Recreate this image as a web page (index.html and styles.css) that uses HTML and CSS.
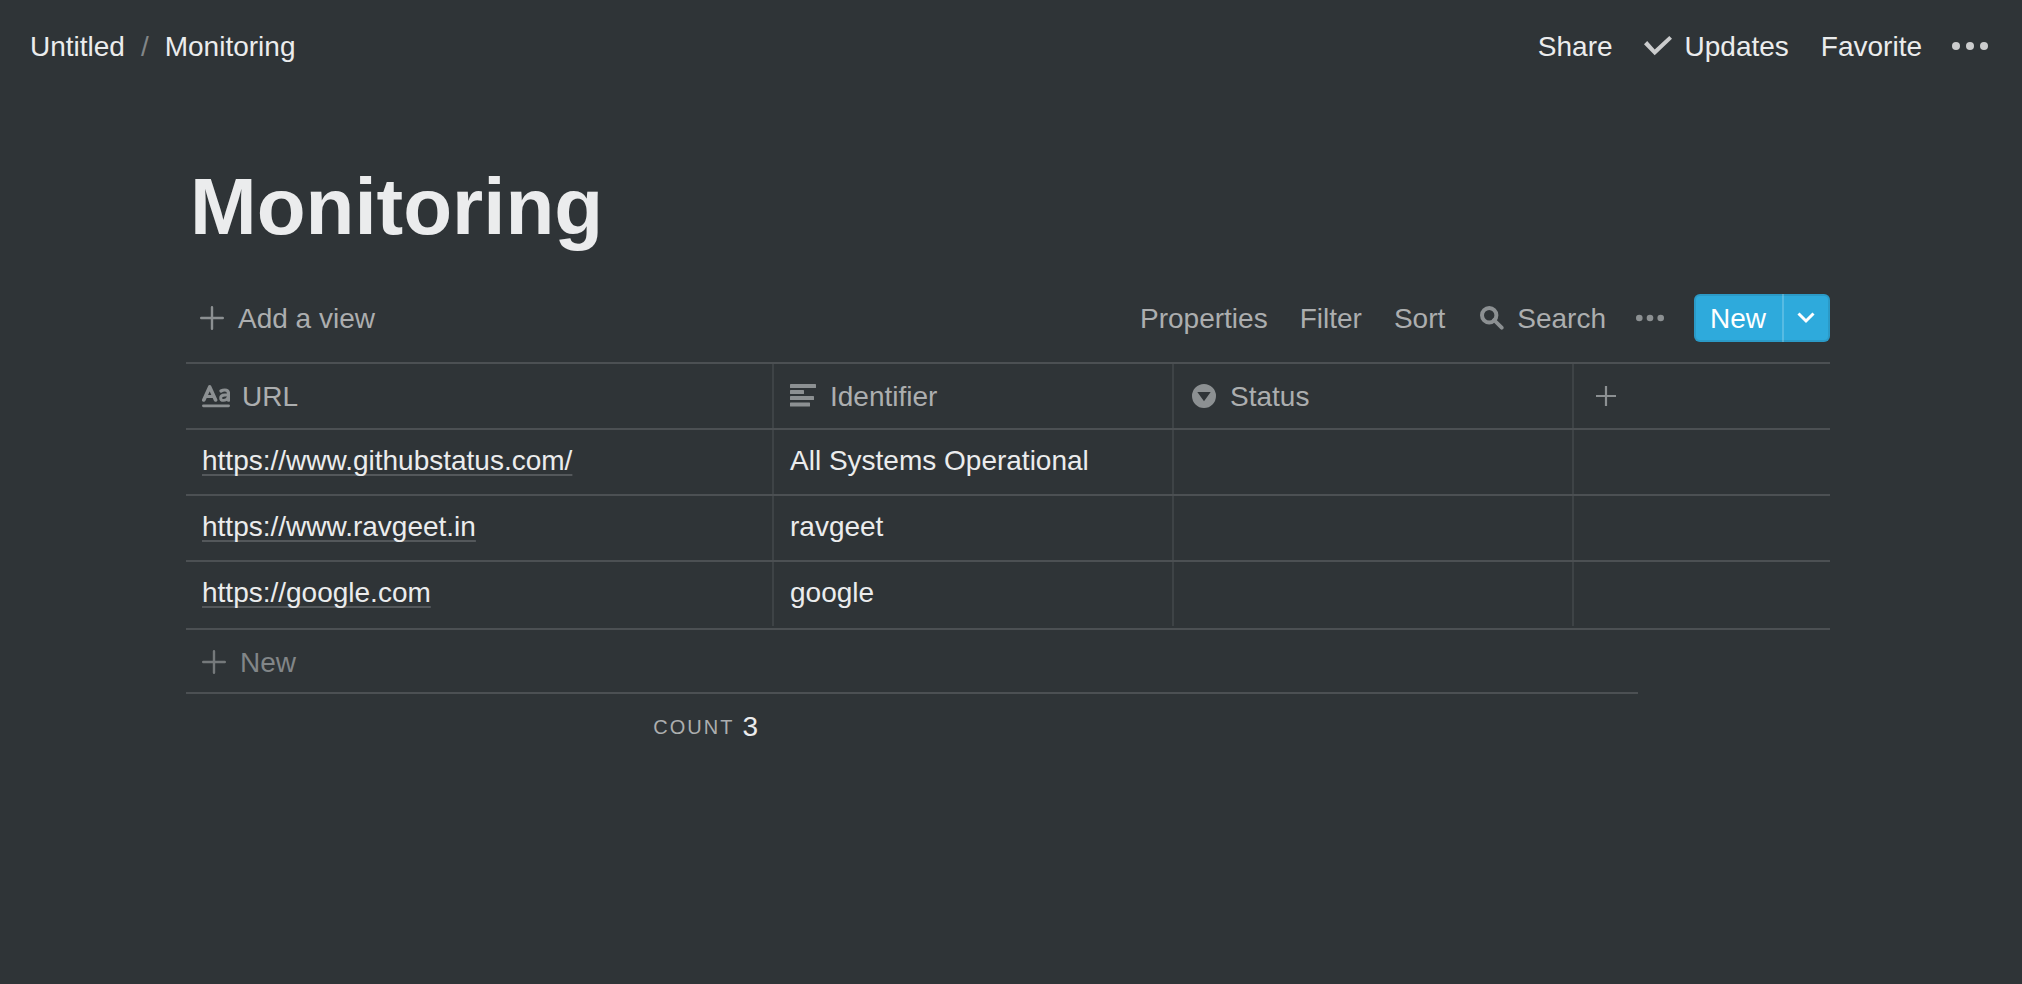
FILE: index.html
```html
<!DOCTYPE html>
<html lang="en">
<head>
<meta charset="utf-8">
<title>Monitoring</title>
<link rel="stylesheet" href="styles.css">
</head>
<body>
<header class="topbar">
  <nav class="breadcrumb" aria-label="Breadcrumb">
    <a href="#">Untitled</a>
    <span class="separator">/</span>
    <a href="#">Monitoring</a>
  </nav>
  <div class="actions">
    <button type="button">Share</button>
    <button type="button" class="updates">
      <svg width="28" height="20" viewBox="0 0 28 20" aria-hidden="true"><path d="M0 8.300 10.700 19.300 28 2.700 25.300 0 10.700 13.400 3.200 5Z" fill="currentColor"/></svg>
      Updates
    </button>
    <button type="button">Favorite</button>
    <button type="button" class="more" aria-label="More page actions">
      <svg width="36" height="8" viewBox="0 0 36 8" aria-hidden="true"><g fill="currentColor"><circle cx="4" cy="4" r="4"/><circle cx="18" cy="4" r="4"/><circle cx="32" cy="4" r="4"/></g></svg>
    </button>
  </div>
</header>

<main class="page">
  <h1>Monitoring</h1>

  <div class="toolbar">
    <button type="button" class="add-view">
      <svg width="24" height="24" viewBox="0 0 24 24" aria-hidden="true"><path d="M12 1.200v21.600M1.200 12h21.600" stroke="currentColor" stroke-width="2.400" stroke-linecap="round"/></svg>
      Add a view
    </button>
    <div class="tools">
      <button type="button">Properties</button>
      <button type="button">Filter</button>
      <button type="button">Sort</button>
      <button type="button" class="search">
        <svg width="24" height="24" viewBox="0 0 24 24" aria-hidden="true"><g fill="none" stroke="currentColor" stroke-width="4"><circle cx="9.200" cy="9.200" r="7.200"/><path d="M14 14l7.700 7.700" stroke-linecap="round" stroke-width="3.800"/></g></svg>
        Search
      </button>
      <button type="button" class="more" aria-label="More view options">
        <svg width="28" height="8" viewBox="0 0 28 8" aria-hidden="true"><g fill="currentColor"><circle cx="3.300" cy="4" r="3.300"/><circle cx="14" cy="4" r="3.300"/><circle cx="24.700" cy="4" r="3.300"/></g></svg>
      </button>
      <div class="new-group">
        <button type="button" class="new-main">New</button>
        <button type="button" class="new-menu" aria-label="New from template">
          <svg width="18" height="12" viewBox="0 0 18 12" aria-hidden="true"><path d="M1.500 1.500 9 9 16.500 1.500" fill="none" stroke="currentColor" stroke-width="3"/></svg>
        </button>
      </div>
    </div>
  </div>

  <div class="table-wrap">
    <table>
      <colgroup><col class="col-url"><col class="col-prop"><col class="col-prop"><col></colgroup>
      <thead>
        <tr>
          <th scope="col"><div class="head">
            <svg width="28" height="24" viewBox="0 0 28 24" aria-hidden="true"><g fill="none" stroke="currentColor" stroke-linecap="round" stroke-linejoin="round"><path d="M1.800 16 7.700 2.900 13.600 16" stroke-width="3.600"/><path d="M4 12.400h7.500" stroke-width="3"/><path d="M19 7q1.800-1 3.900-1 3.600 0 3.600 3.600v6.600" stroke-width="3.200"/><path d="M26 11h-3.200q-4.200.2-4.200 2.900 0 2.500 2.900 2.500 3 0 4.500-2.600" stroke-width="2.800"/></g><rect y="20.400" width="28" height="2.800" rx="1.400" fill="currentColor"/></svg>
            URL</div></th>
          <th scope="col"><div class="head wide">
            <svg width="26" height="24" viewBox="0 0 26 24" aria-hidden="true"><g fill="currentColor"><rect width="26" height="4" rx=".6"/><rect y="6" width="14" height="4" rx=".6"/><rect y="12" width="24" height="4" rx=".6"/><rect y="18.500" width="20" height="4" rx=".6"/></g></svg>
            Identifier</div></th>
          <th scope="col"><div class="head select">
            <svg width="24" height="24" viewBox="0 0 24 24" aria-hidden="true"><path fill="currentColor" fill-rule="evenodd" d="M12 0a12 12 0 1 0 0 24a12 12 0 1 0 0-24ZM5.300 8h13.400L12 17.200Z"/></svg>
            Status</div></th>
          <th scope="col"><button type="button" class="add-column" aria-label="Add a property">
            <svg width="20" height="20" viewBox="0 0 20 20" aria-hidden="true"><path d="M10 0v20M0 10h20" stroke="currentColor" stroke-width="2.200"/></svg>
          </button></th>
        </tr>
      </thead>
      <tbody>
        <tr><td><a href="https://www.githubstatus.com/">https://www.githubstatus.com/</a></td><td>All Systems Operational</td><td></td><td></td></tr>
        <tr><td><a href="https://www.ravgeet.in">https://www.ravgeet.in</a></td><td>ravgeet</td><td></td><td></td></tr>
        <tr><td><a href="https://google.com">https://google.com</a></td><td>google</td><td></td><td></td></tr>
      </tbody>
    </table>
  </div>
  <button type="button" class="add-row">
    <svg width="24" height="24" viewBox="0 0 24 24" aria-hidden="true"><path d="M12 1.200v21.600M1.200 12h21.600" stroke="currentColor" stroke-width="2.400" stroke-linecap="round"/></svg>
    New
  </button>
  <div class="summary"><span class="label">Count</span><span class="value">3</span></div>
</main>
</body>
</html>
```
FILE: styles.css
```css
* { box-sizing: border-box; }

body {
  margin: 0;
  min-height: 100vh;
  background: #2f3437;
  color: #ebeced;
  font: 28px/33px "Liberation Sans", Arial, sans-serif;
}

button {
  display: flex;
  align-items: center;
  gap: 12px;
  padding: 0;
  border: 0;
  background: none;
  color: inherit;
  font: inherit;
  white-space: nowrap;
  cursor: pointer;
}

svg { display: block; flex: none; }
a { color: inherit; text-decoration: none; }

.topbar {
  display: flex;
  align-items: center;
  justify-content: space-between;
  height: 92px;
  padding: 0 34px 0 30px;
}

.breadcrumb { display: flex; gap: 16px; }
.separator { color: #828688; }
.actions { display: flex; align-items: center; gap: 32px; }
.actions svg { color: #cbcccd; }
.actions .more { margin-left: -2px; }
.actions .updates { gap: 13px; margin-left: -1px; }

.page { padding: 64px 192px 0 186px; }

h1 {
  margin: 0;
  padding-left: 4px;
  font-size: 80px;
  line-height: 102px;
}

.toolbar {
  display: flex;
  align-items: center;
  justify-content: space-between;
  margin-top: 36px;
  padding-bottom: 20px;
  color: #acaeaf;
}

.toolbar svg, .head svg, .add-column svg { color: #8c9092; }
.add-view { gap: 14px; padding-left: 14px; }
.tools { display: flex; align-items: center; gap: 32px; }
.tools .search { gap: 13px; padding-left: 3px; }
.tools .more { margin: 0 -2px; }

.new-group {
  display: flex;
  height: 48px;
  border-radius: 6px;
  background: #2eaadc;
  box-shadow: inset 0 0 0 2px rgba(15, 15, 15, 0.1);
  color: #fff;
}
.new-main { padding: 0 16px; }
.new-menu {
  justify-content: center;
  width: 48px;
  padding-right: 2px;
  border-left: 2px solid rgba(255, 255, 255, 0.2);
}
.toolbar .new-menu svg { color: #fff; }

.table-wrap {
  padding-bottom: 2px;
  border-top: 2px solid #4c5053;
  border-bottom: 2px solid #4c5053;
}

table {
  width: 100%;
  table-layout: fixed;
  border-spacing: 0;
}
.col-url { width: 588px; }
.col-prop { width: 400px; }

th, td {
  height: 66px;
  padding: 0 16px;
  border-bottom: 2px solid #4c5053;
  box-shadow: inset -2px 0 #3e4346;
  text-align: left;
  font-weight: 400;
}
th { color: #acaeaf; }
td { padding-bottom: 4px; }
th:last-child, td:last-child { box-shadow: none; }
tr:last-child td { height: 64px; border-bottom: 0; }

td a {
  text-decoration: underline 2px #54585b;
  text-underline-offset: 4px;
  text-decoration-skip-ink: none;
}

.head { display: flex; align-items: center; gap: 12px; }
.head.wide { gap: 14px; }
.head.select { gap: 14px; padding-left: 2px; }
.add-column { padding-left: 6px; }

.add-row {
  gap: 14px;
  width: calc(100% - 192px);
  height: 64px;
  padding: 2px 0 0 16px;
  border-bottom: 2px solid #4c5053;
  color: #828688;
}
.add-row svg { color: #75797b; }

.summary {
  display: flex;
  align-items: center;
  justify-content: flex-end;
  gap: 8px;
  width: 588px;
  padding: 16px 16px 0 0;
}
.label {
  color: #acaeaf;
  font-size: 20px;
  line-height: 24px;
  letter-spacing: 2px;
  text-transform: uppercase;
}
```
